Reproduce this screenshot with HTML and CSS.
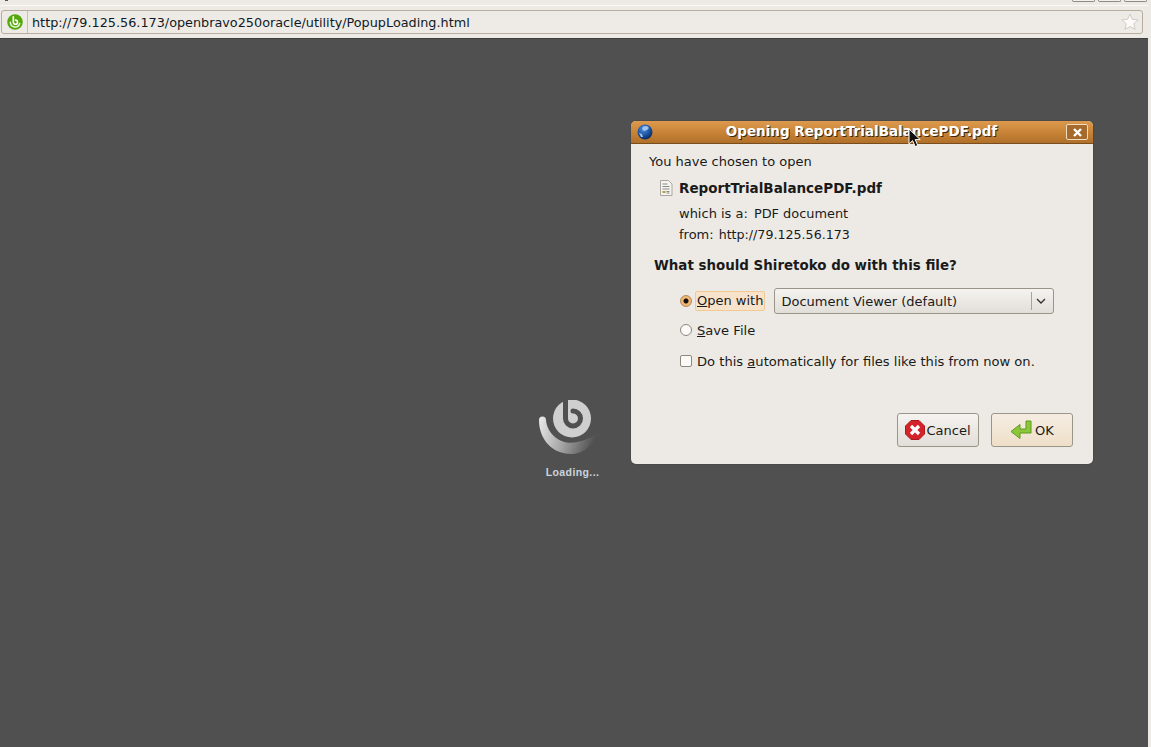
FILE: index.html
```html
<!DOCTYPE html>
<html>
<head>
  <title>Opening ReportTrialBalancePDF.pdf</title>
  <link rel="stylesheet" href="styles.css">
</head>
<body>
<div class="browser">
  <div class="top-strip">
    <span class="top-stub"></span>
    <span class="top-btn"></span>
    <span class="top-btn"></span>
    <span class="top-btn"></span>
  </div>
  <div class="url-bar">
    <span class="site-icon">
      <svg width="16" height="16" viewBox="0 0 16 16">
        <circle cx="8" cy="8" r="7.800" fill="#55a80c"/>
        <path d="M3.300 8.300a4.800 4.800 0 0 0 9.400 1.200" fill="none" stroke="#e8f3dc" stroke-width="1.500" stroke-linecap="round"/>
        <path d="M6.300 2.800v5.400a2.100 2.100 0 1 0 2.100-2.100" fill="none" stroke="#fff" stroke-width="1.600" stroke-linecap="round"/>
      </svg>
    </span>
    <span class="url-text">http://79.125.56.173/openbravo250oracle/utility/PopupLoading.html</span>
    <svg class="star" width="18" height="18" viewBox="0 0 18 18">
      <path d="M9 1l2.400 5.300 5.700.6-4.300 3.800 1.300 5.700L9 13.500l-5.100 2.900 1.300-5.700L.9 6.900l5.700-.6z" fill="#fbfaf8" stroke="#cfcbc4" stroke-width="1"/>
    </svg>
  </div>
  <div class="page">
    <div class="loading">
      <svg width="67" height="54" viewBox="0 0 67 54">
        <defs>
          <linearGradient id="swirl" x1="0" y1="0" x2="1" y2="0.2">
            <stop offset="0" stop-color="#ececec"/>
            <stop offset="0.5" stop-color="#a6a6a6"/>
            <stop offset="1" stop-color="#525252"/>
          </linearGradient>
        </defs>
        <path d="M0 20C0 40 14 54 32 54C44 54 54 46 60 32C52 38 42 43 30 42.700C18 42 8 32 7 20A3.500 3.500 0 0 0 0 20z" fill="url(#swirl)"/>
        <circle cx="33" cy="18.500" r="19" fill="#cfcfcf"/>
        <path d="M26.500 0V18.500a7.500 7.500 0 1 0 7.500-7.500" fill="none" stroke="#505050" stroke-width="5" stroke-linecap="round"/>
      </svg>
      <span class="loading-text">Loading...</span>
    </div>

    <div class="dialog">
      <div class="dialog-title">
        <svg class="globe" width="16" height="16" viewBox="0 0 16 16">
          <defs>
            <radialGradient id="globe" cx="0.4" cy="0.3" r="0.8">
              <stop offset="0" stop-color="#4f8fd8"/>
              <stop offset="0.6" stop-color="#174a96"/>
              <stop offset="1" stop-color="#0a1f46"/>
            </radialGradient>
          </defs>
          <circle cx="8" cy="8" r="7.500" fill="url(#globe)"/>
          <path d="M6 2.500l4-.5 2 2-2 2-3 1-2-2zM2 9l3 1 1 3-2 0z" fill="#9cc4ec"/>
        </svg>
        <span class="title-text">Opening ReportTrialBalancePDF.pdf</span>
        <span class="close-box">
          <svg width="9" height="9" viewBox="0 0 9 9"><path d="M1 1l7 7M8 1l-7 7" stroke="#fff" stroke-width="2.400"/></svg>
        </span>
      </div>
      <div class="dialog-body">
        <div class="chosen">You have chosen to open</div>
        <div class="file-row">
          <svg width="14" height="16" viewBox="0 0 14 16">
            <path d="M1.500.5h8l3.500 3.500v11.500h-11.500z" fill="#f4f3ef" stroke="#a9a69f"/>
            <path d="M3.500 4h5M3.500 6.500h7M3.500 9h7" stroke="#8c8a84"/>
            <path d="M3.500 11h3v2h-3z" fill="#b59b4c"/>
            <path d="M7.500 11.500h3M7.500 13h3" stroke="#8c8a84"/>
          </svg>
          <b class="file-name">ReportTrialBalancePDF.pdf</b>
        </div>
        <div class="meta-row"><span>which is a:</span><span class="meta-type">PDF document</span></div>
        <div class="meta-row"><span>from:</span><span class="meta-url">http://79.125.56.173</span></div>
        <div class="question">What should Shiretoko do with this file?</div>
        <div class="options">
          <div class="option option-open">
            <span class="radio radio-on"></span>
            <span class="open-label"><u>O</u>pen with</span>
            <div class="combo">
              <span class="combo-text">Document Viewer (default)</span>
              <span class="combo-sep"></span>
              <svg width="10" height="6" viewBox="0 0 10 6"><path d="M1 1l4 4 4-4" fill="none" stroke="#333" stroke-width="1.400"/></svg>
            </div>
          </div>
          <div class="option option-save">
            <span class="radio"></span>
            <span class="save-label"><u>S</u>ave File</span>
          </div>
          <div class="option option-auto">
            <span class="check"></span>
            <span class="save-label">Do this <u>a</u>utomatically for files like this from now on.</span>
          </div>
        </div>
        <div class="buttons">
          <button class="btn btn-cancel">
            <svg width="20" height="20" viewBox="0 0 20 20">
              <path d="M6 .5h8l5.500 5.500v8l-5.500 5.500h-8l-5.500-5.500v-8z" fill="#d3242a" stroke="#a81a1e"/>
              <path d="M6 6l8 8M14 6l-8 8" stroke="#fff" stroke-width="3.200"/>
            </svg>
            Cancel
          </button>
          <button class="btn btn-ok">
            <svg width="22" height="20" viewBox="0 0 22 20">
              <path d="M21 1v12H10v5.500L1 11.500 10 4.500V9h6V1z" fill="#8cc63a" stroke="#5f9a1c" stroke-linejoin="round"/>
            </svg>
            OK
          </button>
        </div>
      </div>
    </div>

    <svg class="cursor" width="14" height="20" viewBox="0 0 14 20">
      <path d="M1 1v15l3.600-3.400 2.600 6 2.600-1.100-2.600-5.900h5z" fill="#111" stroke="#fff" stroke-width="1"/>
    </svg>
  </div>
</div>
</body>
</html>
```

FILE: styles.css
```css
html, body {
  margin: 0;
  height: 100%;
  background: #edeae5;
  overflow: hidden;
}
body {
  font-family: "DejaVu Sans", sans-serif;
  font-size: 13px;
  color: #1a1a1a;
}
.browser {
  display: flex;
  flex-direction: column;
  width: 1148px;
  height: 747px;
}
.top-strip {
  display: flex;
  gap: 3px;
  height: 6px;
  padding-right: 1px;
  background: #edeae5;
  border-bottom: 1px solid #f9f8f6;
  box-sizing: border-box;
  flex-shrink: 0;
}
.top-stub {
  width: 3px;
  height: 1px;
  margin: 0 auto 0 5px;
  background: #55534f;
}
.top-btn {
  width: 21px;
  height: 1px;
  border: 1px solid #8f8a82;
  border-top: 0;
  border-radius: 0 0 2px 2px;
  background: #f2f0ec;
}
.url-bar {
  display: flex;
  align-items: center;
  height: 24px;
  margin: 4px 5px 0 1px;
  box-sizing: border-box;
  border: 1px solid #b8ae9f;
  border-radius: 3px;
  background: #eeebe6;
  flex-shrink: 0;
}
.site-icon {
  display: flex;
  align-items: center;
  height: 100%;
  padding: 0 4px 0 5px;
  margin-right: 4px;
  border-right: 1px solid #c6c0b6;
}
.url-text {
  flex: 1;
  font-size: 12.800px;
  color: #0f1a24;
}
.star {
  margin-right: 3px;
}
.page {
  position: relative;
  flex: 1;
  margin-top: 4px;
  border-top: 1px solid #3f3f3f;
  background: #505050;
}
.loading {
  position: absolute;
  left: 533px;
  top: 361px;
  width: 79px;
  display: flex;
  flex-direction: column;
  align-items: center;
}
.loading-text {
  margin-top: 12px;
  font-family: "Liberation Sans", sans-serif;
  font-size: 10.500px;
  font-weight: bold;
  color: #cdd3dc;
  letter-spacing: 0.400px;
}
.dialog {
  position: absolute;
  left: 631px;
  top: 82px;
  width: 462px;
  height: 343px;
  box-sizing: border-box;
  display: flex;
  flex-direction: column;
  background: #edeae5;
  border-radius: 5px;
  box-shadow: 0 0 0 1px #4a4a4a;
  overflow: hidden;
}
.dialog-title {
  display: flex;
  align-items: center;
  height: 23px;
  flex-shrink: 0;
  padding: 0 5px 0 6px;
  background: linear-gradient(#dd9a4e, #c98437 50%, #b0702a);
  border-bottom: 1px solid #7a4d1c;
  box-sizing: border-box;
}
.title-text {
  flex: 1;
  padding: 0 0 2px 4px;
  text-align: center;
  font-size: 13.500px;
  font-weight: bold;
  color: #fff;
  text-shadow: 1px 1px 0 #3d2a10;
}
.close-box {
  display: flex;
  align-items: center;
  justify-content: center;
  width: 20px;
  height: 14px;
  border: 1px solid #f0dcc0;
  border-radius: 2px;
  background: #a56a2c;
}
.dialog-body {
  flex: 1;
  display: flex;
  flex-direction: column;
  padding: 10px 18px 17px;
}
.chosen {
  line-height: 16px;
}
.file-row {
  display: flex;
  align-items: center;
  gap: 6px;
  margin: 10px 0 0 10px;
  height: 16px;
}
.file-name {
  font-size: 13.500px;
  font-weight: bold;
}
.meta-row {
  display: flex;
  gap: 6px;
  margin: 1px 0 0 30px;
  line-height: 20px;
}
.file-row + .meta-row {
  margin-top: 8px;
}
.meta-type {
  font-size: 12.900px;
}
.meta-url {
  margin-left: -1px;
  font-size: 12.650px;
}
.question {
  margin: 11px 0 0 5px;
  font-size: 13.420px;
  font-weight: bold;
  line-height: 20px;
}
.options {
  margin-left: 30px;
}
.option {
  display: flex;
  align-items: center;
}
.option-open {
  margin-top: 11px;
  height: 28px;
}
.option-save {
  margin-top: 2px;
  height: 26px;
}
.option-auto {
  margin-top: 5px;
  height: 26px;
}
.radio, .check {
  flex-shrink: 0;
  box-sizing: border-box;
  width: 12px;
  height: 12px;
  margin: 0 3px 0 1px;
  border: 1px solid #8f877c;
  background: #fbfaf9;
}
.radio {
  border-radius: 50%;
}
.check {
  border-radius: 2px;
}
.radio-on {
  background: radial-gradient(circle, #111 0 2px, #f2b673 3px);
  border-color: #b08a58;
}
.open-label {
  padding: 0 1px;
  line-height: 18px;
  border: 1px solid #f3c992;
  border-radius: 2px;
  background: #f7e3cc;
}
.save-label {
  margin-left: 1px;
  padding-left: 1px;
  font-size: 13.100px;
}
.combo {
  display: flex;
  align-items: center;
  width: 280px;
  height: 26px;
  margin-left: 9px;
  padding: 0 7px 0 6px;
  box-sizing: border-box;
  border: 1px solid #9b9589;
  border-radius: 3px;
  background: linear-gradient(#f5f3f0, #e2ded8);
  flex-shrink: 0;
}
.combo-text {
  flex: 1;
}
.combo-sep {
  width: 1px;
  height: 18px;
  margin-right: 4px;
  background: #a9a399;
}
.buttons {
  display: flex;
  justify-content: flex-end;
  gap: 12px;
  margin-top: auto;
  margin-right: 2px;
}
.btn {
  display: flex;
  align-items: center;
  justify-content: center;
  height: 34px;
  width: 82px;
  gap: 1px;
  padding: 0;
  font: inherit;
  color: #1a1a1a;
  border: 1px solid #9b9589;
  border-radius: 3px;
  background: linear-gradient(#f5f3f0, #e2ded8);
}
.btn-ok {
  gap: 3px;
  background: linear-gradient(#f5ede2, #efdfc9);
}
.cursor {
  position: absolute;
  left: 908px;
  top: 89px;
}
```
